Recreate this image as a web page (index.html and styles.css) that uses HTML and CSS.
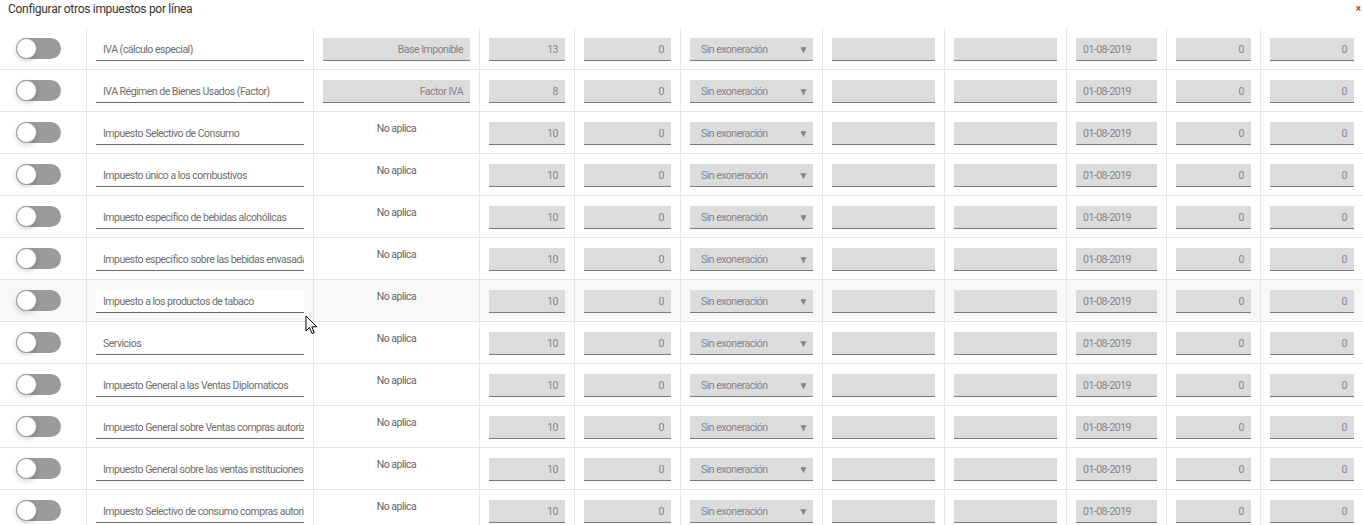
FILE: index.html
```html
<!DOCTYPE html>
<html lang="es">
<head>
<meta charset="utf-8">
<title>Configurar otros impuestos por línea</title>
<link rel="stylesheet" href="styles.css">
</head>
<body>
<div class="modal">
  <div class="modal-head">
    <span class="title">Configurar otros impuestos por línea</span>
    <span class="close">×</span>
  </div>
  <div class="table">
    <div class="row">
      <div class="cell c-toggle"><span class="switch"><span class="knob"></span></span></div>
      <div class="cell"><div class="field name">IVA (cálculo especial)</div></div>
      <div class="cell"><div class="field gray right">Base Imponible</div></div>
      <div class="cell"><div class="field gray right">13</div></div>
      <div class="cell"><div class="field gray right">0</div></div>
      <div class="cell"><div class="field gray select">Sin exoneración<span class="arrow">▼</span></div></div>
      <div class="cell"><div class="field gray"></div></div>
      <div class="cell"><div class="field gray"></div></div>
      <div class="cell"><div class="field gray">01-08-2019</div></div>
      <div class="cell"><div class="field gray right">0</div></div>
      <div class="cell"><div class="field gray right">0</div></div>
    </div>
    <div class="row">
      <div class="cell c-toggle"><span class="switch"><span class="knob"></span></span></div>
      <div class="cell"><div class="field name">IVA Régimen de Bienes Usados (Factor)</div></div>
      <div class="cell"><div class="field gray right">Factor IVA</div></div>
      <div class="cell"><div class="field gray right">8</div></div>
      <div class="cell"><div class="field gray right">0</div></div>
      <div class="cell"><div class="field gray select">Sin exoneración<span class="arrow">▼</span></div></div>
      <div class="cell"><div class="field gray"></div></div>
      <div class="cell"><div class="field gray"></div></div>
      <div class="cell"><div class="field gray">01-08-2019</div></div>
      <div class="cell"><div class="field gray right">0</div></div>
      <div class="cell"><div class="field gray right">0</div></div>
    </div>
    <div class="row">
      <div class="cell c-toggle"><span class="switch"><span class="knob"></span></span></div>
      <div class="cell"><div class="field name">Impuesto Selectivo de Consumo</div></div>
      <div class="cell"><div class="na">No aplica</div></div>
      <div class="cell"><div class="field gray right">10</div></div>
      <div class="cell"><div class="field gray right">0</div></div>
      <div class="cell"><div class="field gray select">Sin exoneración<span class="arrow">▼</span></div></div>
      <div class="cell"><div class="field gray"></div></div>
      <div class="cell"><div class="field gray"></div></div>
      <div class="cell"><div class="field gray">01-08-2019</div></div>
      <div class="cell"><div class="field gray right">0</div></div>
      <div class="cell"><div class="field gray right">0</div></div>
    </div>
    <div class="row">
      <div class="cell c-toggle"><span class="switch"><span class="knob"></span></span></div>
      <div class="cell"><div class="field name">Impuesto único a los combustivos</div></div>
      <div class="cell"><div class="na">No aplica</div></div>
      <div class="cell"><div class="field gray right">10</div></div>
      <div class="cell"><div class="field gray right">0</div></div>
      <div class="cell"><div class="field gray select">Sin exoneración<span class="arrow">▼</span></div></div>
      <div class="cell"><div class="field gray"></div></div>
      <div class="cell"><div class="field gray"></div></div>
      <div class="cell"><div class="field gray">01-08-2019</div></div>
      <div class="cell"><div class="field gray right">0</div></div>
      <div class="cell"><div class="field gray right">0</div></div>
    </div>
    <div class="row">
      <div class="cell c-toggle"><span class="switch"><span class="knob"></span></span></div>
      <div class="cell"><div class="field name">Impuesto especifico de bebidas alcohólicas</div></div>
      <div class="cell"><div class="na">No aplica</div></div>
      <div class="cell"><div class="field gray right">10</div></div>
      <div class="cell"><div class="field gray right">0</div></div>
      <div class="cell"><div class="field gray select">Sin exoneración<span class="arrow">▼</span></div></div>
      <div class="cell"><div class="field gray"></div></div>
      <div class="cell"><div class="field gray"></div></div>
      <div class="cell"><div class="field gray">01-08-2019</div></div>
      <div class="cell"><div class="field gray right">0</div></div>
      <div class="cell"><div class="field gray right">0</div></div>
    </div>
    <div class="row">
      <div class="cell c-toggle"><span class="switch"><span class="knob"></span></span></div>
      <div class="cell"><div class="field name">Impuesto especifico sobre las bebidas envasadas</div></div>
      <div class="cell"><div class="na">No aplica</div></div>
      <div class="cell"><div class="field gray right">10</div></div>
      <div class="cell"><div class="field gray right">0</div></div>
      <div class="cell"><div class="field gray select">Sin exoneración<span class="arrow">▼</span></div></div>
      <div class="cell"><div class="field gray"></div></div>
      <div class="cell"><div class="field gray"></div></div>
      <div class="cell"><div class="field gray">01-08-2019</div></div>
      <div class="cell"><div class="field gray right">0</div></div>
      <div class="cell"><div class="field gray right">0</div></div>
    </div>
    <div class="row hover">
      <div class="cell c-toggle"><span class="switch"><span class="knob"></span></span></div>
      <div class="cell"><div class="field name">Impuesto a los productos de tabaco</div></div>
      <div class="cell"><div class="na">No aplica</div></div>
      <div class="cell"><div class="field gray right">10</div></div>
      <div class="cell"><div class="field gray right">0</div></div>
      <div class="cell"><div class="field gray select">Sin exoneración<span class="arrow">▼</span></div></div>
      <div class="cell"><div class="field gray"></div></div>
      <div class="cell"><div class="field gray"></div></div>
      <div class="cell"><div class="field gray">01-08-2019</div></div>
      <div class="cell"><div class="field gray right">0</div></div>
      <div class="cell"><div class="field gray right">0</div></div>
    </div>
    <div class="row">
      <div class="cell c-toggle"><span class="switch"><span class="knob"></span></span></div>
      <div class="cell"><div class="field name">Servicios</div></div>
      <div class="cell"><div class="na">No aplica</div></div>
      <div class="cell"><div class="field gray right">10</div></div>
      <div class="cell"><div class="field gray right">0</div></div>
      <div class="cell"><div class="field gray select">Sin exoneración<span class="arrow">▼</span></div></div>
      <div class="cell"><div class="field gray"></div></div>
      <div class="cell"><div class="field gray"></div></div>
      <div class="cell"><div class="field gray">01-08-2019</div></div>
      <div class="cell"><div class="field gray right">0</div></div>
      <div class="cell"><div class="field gray right">0</div></div>
    </div>
    <div class="row">
      <div class="cell c-toggle"><span class="switch"><span class="knob"></span></span></div>
      <div class="cell"><div class="field name">Impuesto General a las Ventas Diplomaticos</div></div>
      <div class="cell"><div class="na">No aplica</div></div>
      <div class="cell"><div class="field gray right">10</div></div>
      <div class="cell"><div class="field gray right">0</div></div>
      <div class="cell"><div class="field gray select">Sin exoneración<span class="arrow">▼</span></div></div>
      <div class="cell"><div class="field gray"></div></div>
      <div class="cell"><div class="field gray"></div></div>
      <div class="cell"><div class="field gray">01-08-2019</div></div>
      <div class="cell"><div class="field gray right">0</div></div>
      <div class="cell"><div class="field gray right">0</div></div>
    </div>
    <div class="row">
      <div class="cell c-toggle"><span class="switch"><span class="knob"></span></span></div>
      <div class="cell"><div class="field name">Impuesto General sobre Ventas compras autorizadas</div></div>
      <div class="cell"><div class="na">No aplica</div></div>
      <div class="cell"><div class="field gray right">10</div></div>
      <div class="cell"><div class="field gray right">0</div></div>
      <div class="cell"><div class="field gray select">Sin exoneración<span class="arrow">▼</span></div></div>
      <div class="cell"><div class="field gray"></div></div>
      <div class="cell"><div class="field gray"></div></div>
      <div class="cell"><div class="field gray">01-08-2019</div></div>
      <div class="cell"><div class="field gray right">0</div></div>
      <div class="cell"><div class="field gray right">0</div></div>
    </div>
    <div class="row">
      <div class="cell c-toggle"><span class="switch"><span class="knob"></span></span></div>
      <div class="cell"><div class="field name">Impuesto General sobre las ventas instituciones</div></div>
      <div class="cell"><div class="na">No aplica</div></div>
      <div class="cell"><div class="field gray right">10</div></div>
      <div class="cell"><div class="field gray right">0</div></div>
      <div class="cell"><div class="field gray select">Sin exoneración<span class="arrow">▼</span></div></div>
      <div class="cell"><div class="field gray"></div></div>
      <div class="cell"><div class="field gray"></div></div>
      <div class="cell"><div class="field gray">01-08-2019</div></div>
      <div class="cell"><div class="field gray right">0</div></div>
      <div class="cell"><div class="field gray right">0</div></div>
    </div>
    <div class="row">
      <div class="cell c-toggle"><span class="switch"><span class="knob"></span></span></div>
      <div class="cell"><div class="field name">Impuesto Selectivo de consumo compras autorizadas</div></div>
      <div class="cell"><div class="na">No aplica</div></div>
      <div class="cell"><div class="field gray right">10</div></div>
      <div class="cell"><div class="field gray right">0</div></div>
      <div class="cell"><div class="field gray select">Sin exoneración<span class="arrow">▼</span></div></div>
      <div class="cell"><div class="field gray"></div></div>
      <div class="cell"><div class="field gray"></div></div>
      <div class="cell"><div class="field gray">01-08-2019</div></div>
      <div class="cell"><div class="field gray right">0</div></div>
      <div class="cell"><div class="field gray right">0</div></div>
    </div>
  </div>
  <svg class="cursor" width="13" height="20" viewBox="0 0 13 20" aria-hidden="true">
    <path d="M1 1 L1 16 L4.5 12.5 L7 18.5 L9.2 17.6 L6.8 11.8 L11.8 11.8 Z" fill="#fff" stroke="#000" stroke-width="1" stroke-linejoin="miter"/>
  </svg>
</div>
</body>
</html>
```
FILE: styles.css
```css
* { box-sizing: border-box; }
html, body { margin: 0; padding: 0; background: #fff; }
body {
  font-family: Roboto, "Liberation Sans", sans-serif;
  width: 1363px;
  height: 525px;
  overflow: hidden;
}
.modal { position: relative; }
.modal-head {
  height: 28px;
  display: flex;
  align-items: flex-start;
  justify-content: space-between;
  padding: 2px 2px 0 8px;
}
.title {
  font-size: 12px;
  letter-spacing: -0.3px;
  color: #333;
  line-height: 14px;
}
.close {
  color: #c0392b;
  font-size: 10px;
  font-weight: bold;
  line-height: 14px;
}
.table { display: flex; flex-direction: column; }
.row {
  display: grid;
  grid-template-columns: 86px 227px 166px 95px 106px 142px 122px 122px 100px 94px 103px;
  height: 42px;
  border-bottom: 1px solid #e4e4e4;
  background: #fff;
}
.row.hover { background: #f8f8f8; }
.cell {
  border-left: 1px solid #e6e6e6;
  padding: 10px 9px 0 9px;
  min-width: 0;
}
.cell.c-toggle { border-left: none; padding: 10px 0 0 16px; }
.switch {
  display: block;
  position: relative;
  width: 45px;
  height: 21px;
  border-radius: 11px;
  background: #9b9b9b;
}
.knob {
  position: absolute;
  left: 0;
  top: 0;
  width: 21px;
  height: 21px;
  border-radius: 50%;
  background: #fff;
  border: 1px solid #9a9a9a;
  box-shadow: 0 2px 5px rgba(0,0,0,0.18);
}
.field {
  height: 23px;
  border-bottom: 1px solid #7a7a7a;
  font-size: 10.5px;
  letter-spacing: -0.5px;
  line-height: 24px;
  color: #858585;
  white-space: nowrap;
  overflow: hidden;
  padding: 0 7px;
}
.field.name {
  background: #fff;
  color: #6e6e6e;
  padding-left: 7px;
  border-bottom-color: #6a6a6a;
}
.field.gray { background: #dcdcdc; }
.field.right { text-align: right; padding-right: 7px; }
.field.select {
  display: flex;
  justify-content: space-between;
  padding: 0 5px 0 11px;
}
.arrow { font-size: 10px; color: #858585; line-height: 23px; }
.na {
  text-align: center;
  font-size: 10.5px;
  letter-spacing: -0.5px;
  color: #666;
  line-height: 13px;
}
.cursor {
  position: absolute;
  left: 305px;
  top: 315px;
}
```
